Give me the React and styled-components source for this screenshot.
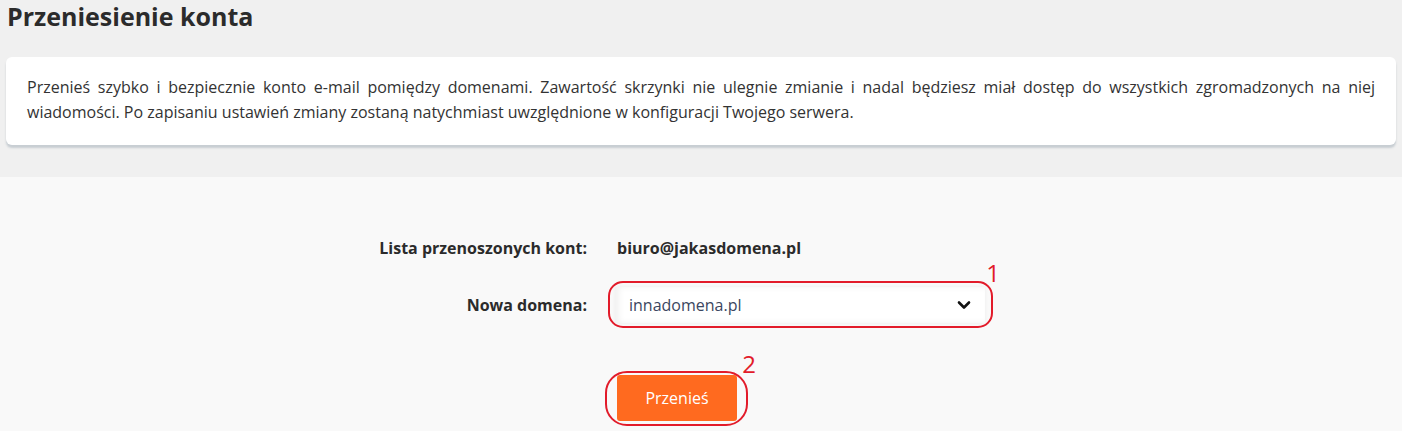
import React from 'react'
import styled, { createGlobalStyle } from 'styled-components'

const GlobalStyle = createGlobalStyle`
    body {
        margin: 0;
        background: #f9f9f9;
        font-family: "Open Sans", "Noto Sans", sans-serif;
        color: #333;
    }
`

const Top = styled.div`
    background: #f0f0f0;
    padding: 0 6px 32px 6px;
`

const Title = styled.h1`
    margin: 0;
    padding: 0 0 0 1px;
    font-size: 25px;
    line-height: 32px;
    font-weight: 700;
    color: #2b2b2b;
    height: 57px;
`

const Card = styled.div`
    background: #fff;
    border-radius: 6px;
    box-shadow: 0 3px 2px rgba(150, 165, 175, 0.45);
    padding: 18px 21px 20px 21px;
    font-size: 16px;
    line-height: 25px;
    text-align: justify;
    color: #333;
`

const Section = styled.div`
    background: #f9f9f9;
    padding: 57px 0 10px 0;
`

const Form = styled.div`
    display: grid;
    grid-template-columns: 587px 380px;
    column-gap: 28px;
    row-gap: 25px;
    align-items: center;
`

const Label = styled.div`
    text-align: right;
    font-size: 16px;
    font-weight: 700;
    color: #2b2b2b;
    height: ${(p) => p.$h}px;
    line-height: ${(p) => p.$h}px;
`

const Value = styled.div`
    font-size: 16px;
    font-weight: 700;
    color: #2b2b2b;
    padding-left: 2px;
    line-height: 28px;
`

const Marked = styled.div`
    position: relative;
    display: inline-block;
    vertical-align: top;
`

const Ring = styled.div`
    position: absolute;
    left: ${(p) => p.$l}px;
    right: ${(p) => p.$r}px;
    top: ${(p) => p.$t}px;
    bottom: ${(p) => p.$b}px;
    border: 2px solid #e21b2a;
    border-radius: ${(p) => p.$rad}px;
    pointer-events: none;
`

const Num = styled.span`
    position: absolute;
    color: #e21b2a;
    font-size: 24px;
    line-height: 24px;
    font-family: "Open Sans", sans-serif;
    right: ${(p) => p.$r}px;
    top: ${(p) => p.$t}px;
`

const Select = styled.div`
    width: 370px;
    height: 36px;
    background: #fff;
    box-shadow: inset 4px 0 6px rgba(0, 0, 0, 0.06), 0 0 4px rgba(0, 0, 0, 0.05);
    display: flex;
    align-items: center;
    justify-content: space-between;
    padding: 0 14px 0 14px;
    box-sizing: border-box;
    font-size: 16px;
    color: #3b4660;
`

const ButtonRow = styled.div`
    grid-column: 2;
    padding-top: 27px;
    padding-left: 2px;
`

const Button = styled.button`
    display: block;
    background: #ff6a1f;
    color: #fff;
    border: none;
    border-radius: 3px;
    width: 120px;
    height: 46px;
    padding: 0;
    font-family: "Open Sans", sans-serif;
    font-size: 16px;
`

const Chevron = () => (
    <svg width="14" height="10" viewBox="0 0 14 10">
        <path d="M2 2.5 L7 7.5 L12 2.5" fill="none" stroke="#111" strokeWidth="2.6" strokeLinecap="round" strokeLinejoin="round" />
    </svg>
)

export default function App() {
    return (
        <>
            <GlobalStyle />
            <Top>
                <Title>Przeniesienie konta</Title>
                <Card>
                    Przenieś szybko i bezpiecznie konto e-mail pomiędzy domenami. Zawartość skrzynki nie ulegnie zmianie i nadal będziesz miał dostęp do wszystkich zgromadzonych na niej wiadomości. Po zapisaniu ustawień zmiany zostaną natychmiast uwzględnione w konfiguracji Twojego serwera.
                </Card>
            </Top>
            <Section>
                <Form>
                    <Label $h={28}>Lista przenoszonych kont:</Label>
                    <Value>biuro@jakasdomena.pl</Value>
                    <Label $h={36}>Nowa domena:</Label>
                    <div>
                        <Marked>
                            <Select>
                                <span>innadomena.pl</span>
                                <Chevron />
                            </Select>
                            <Ring $l={-7} $r={-8} $t={-6} $b={-5} $rad={15} />
                            <Num $r={-15} $t={-26}>1</Num>
                        </Marked>
                    </div>
                    <ButtonRow>
                        <Marked>
                            <Button>Przenieś</Button>
                            <Ring $l={-12} $r={-11} $t={-4} $b={-5} $rad={22} />
                            <Num $r={-19} $t={-23}>2</Num>
                        </Marked>
                    </ButtonRow>
                </Form>
            </Section>
        </>
    )
}
